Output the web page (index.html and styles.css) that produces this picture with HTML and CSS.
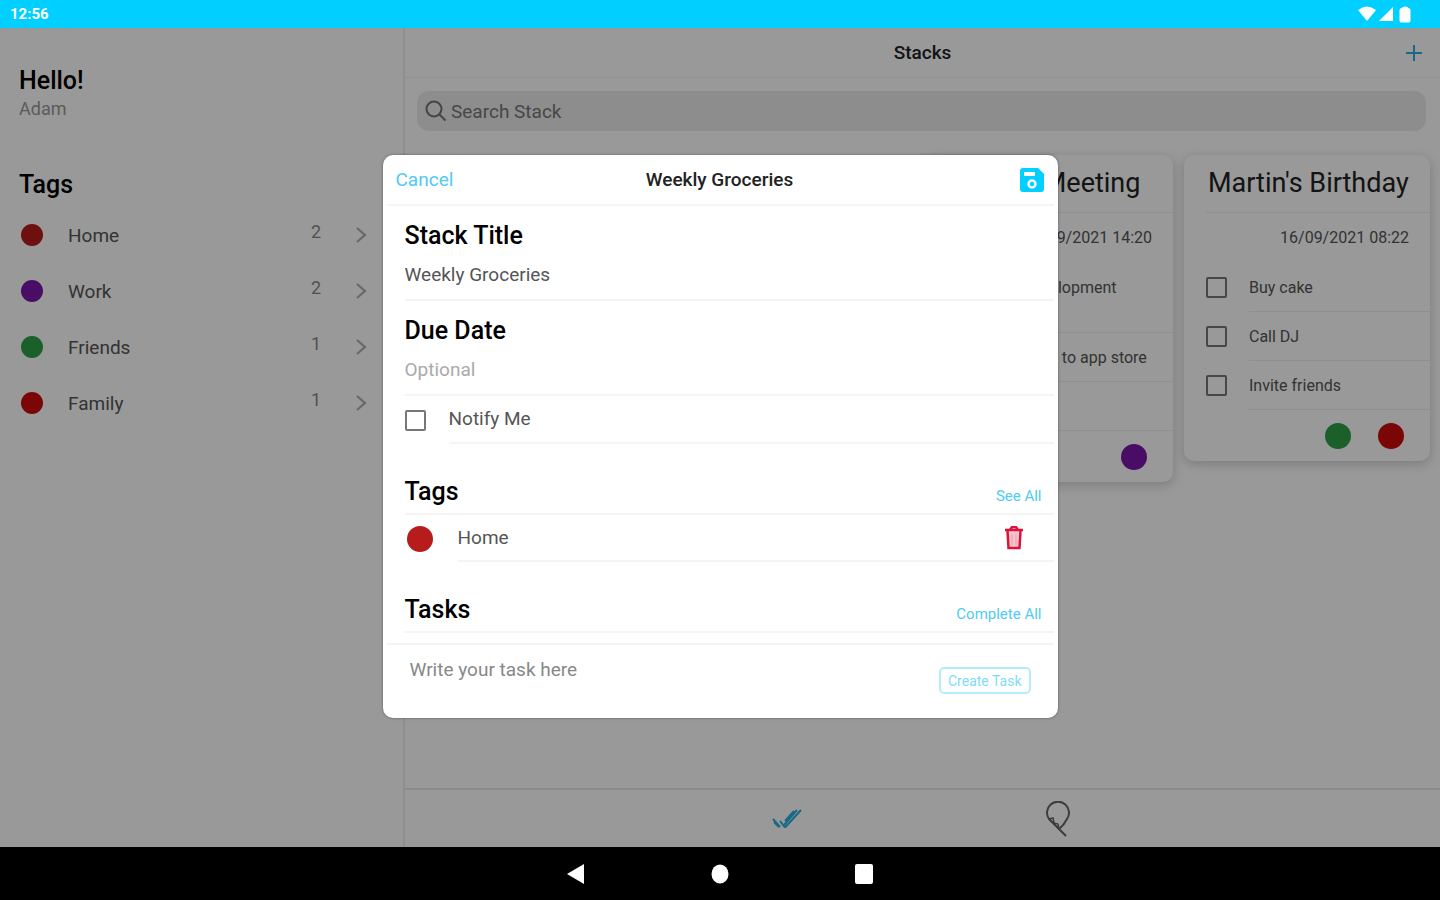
FILE: index.html
```html
<!DOCTYPE html>
<html lang="en">
<head>
<meta charset="utf-8">
<title>Stacks</title>
<link rel="stylesheet" href="styles.css">
</head>
<body>
<div class="status-bar">
  <span class="clock">12:56</span>
  <div class="status-icons">
    <svg width="18" height="16" viewBox="0 0 18 16"><path d="M0 4Q9-3 18 4L9 15Z" fill="#fff"/></svg>
    <svg width="16" height="16" viewBox="0 0 16 16"><path d="M15 1V15H1Z" fill="#fff"/></svg>
    <svg class="battery" width="12" height="17" viewBox="0 0 12 17"><path d="M3 2Q3 .5 6 .5T9 2Q11.500 2 11.500 4v10.500Q11.500 16.500 10 16.500H2Q.5 16.500.5 14.500V4Q.5 2 3 2Z" fill="#fff"/></svg>
  </div>
</div>

<div class="app">
  <aside class="sidebar">
    <h1 class="heading">Hello!</h1>
    <p class="user">Adam</p>
    <h2 class="heading sidebar-title">Tags</h2>
    <ul class="tag-list">
      <li class="tag-row"><span class="dot home"></span><span class="tag-name">Home</span><span class="count">2</span><svg class="chevron" width="12" height="18" viewBox="0 0 12 18"><path d="M2 2l8 7-8 7"/></svg></li>
      <li class="tag-row"><span class="dot purple"></span><span class="tag-name">Work</span><span class="count">2</span><svg class="chevron" width="12" height="18" viewBox="0 0 12 18"><path d="M2 2l8 7-8 7"/></svg></li>
      <li class="tag-row"><span class="dot green"></span><span class="tag-name">Friends</span><span class="count">1</span><svg class="chevron" width="12" height="18" viewBox="0 0 12 18"><path d="M2 2l8 7-8 7"/></svg></li>
      <li class="tag-row"><span class="dot red"></span><span class="tag-name">Family</span><span class="count">1</span><svg class="chevron" width="12" height="18" viewBox="0 0 12 18"><path d="M2 2l8 7-8 7"/></svg></li>
    </ul>
  </aside>

  <main class="main">
    <header class="topbar">
      <h2 class="bar-title">Stacks</h2>
      <button class="icon-button" aria-label="Add stack"><svg width="18" height="18" viewBox="0 0 18 18"><path d="M9 1v16M1 9h16" stroke="#28aee0" stroke-width="2" fill="none"/></svg></button>
    </header>
    <label class="search">
      <svg width="22" height="22" viewBox="0 0 22 22" fill="none" stroke="#737373" stroke-width="2"><circle cx="9" cy="9" r="7.500"/><path d="M14.500 14.500l6 6"/></svg>
      <input class="search-input" type="text" placeholder="Search Stack" aria-label="Search Stack">
    </label>
    <section class="cards">
      <article class="card">
        <h3 class="card-title">Project Meeting</h3>
        <p class="card-date">15/09/2021 14:20</p>
        <label class="task"><input class="check" type="checkbox"><span class="task-text">App development planning</span></label>
        <label class="task"><input class="check" type="checkbox"><span class="task-text">Publish it to app store</span></label>
        <label class="task"><input class="check" type="checkbox"><span class="task-text">Demo</span></label>
        <div class="card-tags"><span class="dot large purple"></span></div>
      </article>
      <article class="card">
        <h3 class="card-title">Martin's Birthday</h3>
        <p class="card-date">16/09/2021 08:22</p>
        <label class="task"><input class="check" type="checkbox"><span class="task-text">Buy cake</span></label>
        <label class="task"><input class="check" type="checkbox"><span class="task-text">Call DJ</span></label>
        <label class="task"><input class="check" type="checkbox"><span class="task-text">Invite friends</span></label>
        <div class="card-tags"><span class="dot large green"></span><span class="dot large red"></span></div>
      </article>
    </section>
    <nav class="tabs">
      <button class="tab" aria-label="Stacks"><svg width="30" height="24" viewBox="0 0 30 24" fill="none" stroke="#28aee0" stroke-width="2"><path d="M1 12l7 8M2 15l5 5M8 14l5 6.500M13 20.500L29 3M12 18L25 3M13 14L22 4"/></svg></button>
      <button class="tab" aria-label="Tags"><svg width="28" height="36" viewBox="0 0 28 36" fill="none" stroke="#666" stroke-width="2"><path d="M15 28L5 18A11 11 0 1 1 23 18Q20 24 15 28l7 7"/><path d="M5 18l4-1 1 5 4 1 1 5M5 18l10 10" stroke-width="1.500"/></svg></button>
    </nav>
  </main>

  <div class="backdrop">
    <form class="dialog" role="dialog" aria-label="Weekly Groceries">
      <header class="dialog-bar">
        <button class="link cancel" type="button">Cancel</button>
        <h2 class="bar-title">Weekly Groceries</h2>
        <button class="icon-button" type="button" aria-label="Save"><svg width="24" height="24" viewBox="0 0 24 24"><path d="M3 0h15l6 6v15q0 3-3 3H3q-3 0-3-3V3q0-3 3-3Z" fill="#00cfff"/><rect x="4" y="4" width="11" height="4" fill="#fff"/><circle cx="12" cy="16" r="3.500" fill="none" stroke="#fff" stroke-width="2.500"/></svg></button>
      </header>
      <div class="dialog-body">
        <div class="field">
          <label class="heading" for="title">Stack Title</label>
          <input class="text-input" id="title" type="text" value="Weekly Groceries">
        </div>
        <div class="field">
          <label class="heading" for="due">Due Date</label>
          <input class="text-input" id="due" type="text" placeholder="Optional">
        </div>
        <label class="notify"><input class="check" type="checkbox"><span class="notify-text">Notify Me</span></label>
        <div class="section-title"><h3 class="heading">Tags</h3><button class="link small" type="button">See All</button></div>
        <div class="picked-tag">
          <span class="dot large home"></span>
          <div class="picked-text"><span>Home</span>
            <button class="icon-button" type="button" aria-label="Remove Home"><svg width="20" height="24" viewBox="0 0 20 24"><path d="M3 5h14l-1 18H4Z" fill="#f8c4cc"/><path d="M1 4h18M6 4l2-3h4l2 3M3.500 5l1 17h11l1-17" fill="none" stroke="#dc143c" stroke-width="2.500"/><path d="M8 8v11M12 8v11" stroke="#f19aaa" stroke-width="1"/></svg></button>
          </div>
        </div>
        <div class="section-title"><h3 class="heading">Tasks</h3><button class="link small" type="button">Complete All</button></div>
      </div>
      <footer class="composer">
        <input class="task-input" type="text" placeholder="Write your task here" aria-label="New task">
        <button class="create" type="button">Create Task</button>
      </footer>
    </form>
  </div>
</div>

<div class="nav-bar">
  <button class="nav-button" aria-label="Back"><svg width="20" height="22" viewBox="0 0 20 22"><path d="M18 1v20L1 11Z" fill="#fff"/></svg></button>
  <button class="nav-button" aria-label="Home"><svg width="20" height="22" viewBox="0 0 20 22"><ellipse cx="10" cy="11" rx="8.500" ry="9.500" fill="#fff"/></svg></button>
  <button class="nav-button" aria-label="Recent apps"><svg width="20" height="22" viewBox="0 0 20 22"><rect x="1" y="1" width="18" height="20" rx="2" fill="#fff"/></svg></button>
</div>
</body>
</html>
```

FILE: styles.css
```css
* { box-sizing: border-box; margin: 0; padding: 0; }
body {
  min-height: 100vh;
  display: flex;
  flex-direction: column;
  font-family: Roboto, "Liberation Sans", sans-serif;
  font-size: 19px;
  color: #555;
  background: #fff;
}
button { border: 0; background: none; font: inherit; cursor: pointer; }
input { font: inherit; color: inherit; border: 0; background: none; outline: 0; }
svg { display: block; }
ul { list-style: none; }

.status-bar {
  height: 28px;
  padding: 0 29px 0 10px;
  display: flex;
  align-items: center;
  justify-content: space-between;
  background: #00cfff;
  color: #fff;
}
.clock { font-size: 15px; font-weight: 700; }
.status-icons { display: flex; align-items: center; gap: 2px; }
.battery { margin-left: 3px; }

.app { position: relative; flex: 1; display: flex; }
.sidebar {
  width: 405px;
  padding: 39px 36px 0 19px;
  border-right: 2px solid #eee;
}
.heading {
  display: block;
  font-size: 25px;
  line-height: 28px;
  font-weight: 500;
  color: #000;
}
.user { line-height: 28px; font-size: 18px; color: #999; }
.sidebar-title { margin-top: 48px; }
.tag-list { margin-top: 8px; }
.tag-row { display: flex; align-items: center; height: 56px; padding-left: 2px; }
.dot { flex: none; width: 22px; height: 22px; border-radius: 50%; }
.large { width: 26px; height: 26px; }
.home { background: #b71c1c; }
.red { background: #cc0a0a; }
.purple { background: #7a16a8; }
.green { background: #2e9e48; }
.tag-name { flex: 1; margin-left: 25px; }
.count { margin-bottom: 8px; font-size: 18px; color: #888; }
.chevron { margin-left: 34px; fill: none; stroke: #aaa; stroke-width: 2; }

.main { flex: 1; min-width: 0; display: flex; flex-direction: column; }
.topbar {
  height: 50px;
  padding: 0 17px;
  display: grid;
  grid-template-columns: 1fr auto 1fr;
  align-items: center;
  border-bottom: 1px solid #f2f2f2;
}
.topbar .bar-title { grid-column: 2; }
.bar-title { font-size: 19px; font-weight: 500; color: #222; }
.icon-button { justify-self: end; }
.search {
  margin: 13px 14px 0 12px;
  height: 40px;
  padding: 0 8px;
  display: flex;
  align-items: center;
  gap: 4px;
  border-radius: 12px;
  background: #ebebeb;
}
.search-input { flex: 1; }
.search-input::placeholder { color: #777; opacity: 1; }

.cards {
  flex: 1;
  margin: 24px 10px 0 8px;
  display: flex;
  align-items: flex-start;
  justify-content: flex-end;
  gap: 11px;
}
.card {
  width: 246px;
  padding-left: 22px;
  border-radius: 10px;
  background: #fff;
  box-shadow: 0 3px 12px rgba(0, 0, 0, .2);
}
.card-title {
  height: 58px;
  padding-left: 2px;
  line-height: 56px;
  font-size: 27px;
  font-weight: 400;
  color: #222;
  border-bottom: 1px solid #eee;
  white-space: nowrap;
}
.card-date { padding-right: 21px; line-height: 50px; font-size: 16px; text-align: right; }
.task { display: flex; }
.check {
  flex: none;
  appearance: none;
  width: 21px;
  height: 21px;
  border: 2px solid #777;
  border-radius: 2px;
}
.task .check { margin-top: 14px; }
.task-text {
  flex: 1;
  margin-left: 22px;
  padding: 14px 16px 13px 0;
  line-height: 21px;
  font-size: 16px;
  border-bottom: 1px solid #eee;
}
.card-tags { height: 51px; padding-right: 26px; display: flex; align-items: center; justify-content: flex-end; gap: 27px; }

.tabs {
  height: 59px;
  padding: 0 247px;
  display: flex;
  border-top: 2px solid #eaeaea;
}
.tab { flex: 1; display: flex; align-items: center; justify-content: center; }

.backdrop {
  position: absolute;
  inset: 0;
  padding-bottom: 2px;
  display: flex;
  align-items: center;
  justify-content: center;
  background: rgba(0, 0, 0, .4);
}
.dialog {
  width: 675px;
  border-radius: 10px;
  background: #fff;
  box-shadow: 0 0 3px rgba(0, 0, 0, .4);
}
.dialog-bar {
  height: 51px;
  margin: 0 4px;
  padding: 0 10px 0 9px;
  display: grid;
  grid-template-columns: 1fr auto 1fr;
  align-items: center;
  border-bottom: 2px solid #f4f4f4;
}
.link { color: #4fcbf5; }
.cancel { justify-self: start; }
.small { font-size: 15px; line-height: 20px; }
.dialog-body { padding: 0 4px 0 22px; }
.field { padding: 16px 0 12px; border-bottom: 2px solid #f4f4f4; }
.text-input { display: block; width: 100%; height: 26px; margin-top: 11px; }
.text-input::placeholder { color: #aaa; opacity: 1; }
.notify { display: flex; align-items: center; height: 48px; }
.notify-text { flex: 1; margin-left: 23px; line-height: 46px; border-bottom: 2px solid #f4f4f4; }
.section-title {
  padding: 34px 12px 7px 0;
  display: flex;
  align-items: flex-end;
  justify-content: space-between;
  border-bottom: 2px solid #f4f4f4;
}
.picked-tag { display: flex; align-items: center; height: 47px; padding-left: 2px; }
.picked-text {
  flex: 1;
  height: 47px;
  margin-left: 25px;
  padding-right: 30px;
  display: flex;
  align-items: center;
  justify-content: space-between;
  border-bottom: 2px solid #f4f4f4;
}
.composer {
  margin: 10px 4px 0;
  padding: 11px 23px 24px;
  display: flex;
  align-items: flex-start;
  border-top: 2px solid #f4f4f4;
}
.task-input { flex: 1; height: 26px; }
.task-input::placeholder { color: #888; opacity: 1; }
.create {
  height: 27px;
  margin-top: 11px;
  padding: 0 7px;
  font-size: 14px;
  color: #7fdcf8;
  border: 2px solid #b5ecfc;
  border-radius: 5px;
}

.nav-bar {
  height: 53px;
  display: flex;
  align-items: center;
  justify-content: center;
  gap: 124px;
  background: #000;
}
```
